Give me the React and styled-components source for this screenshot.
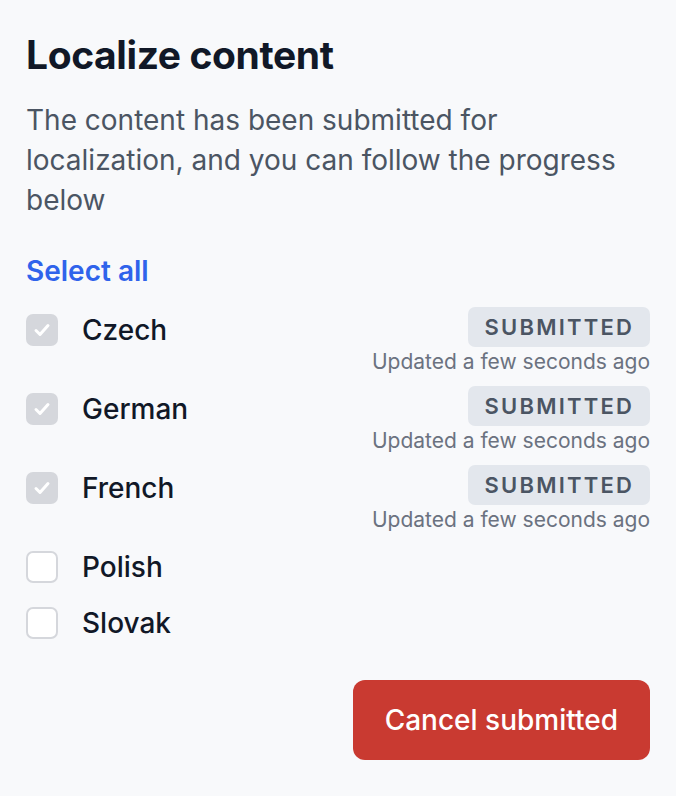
import React, { useState } from 'react';
import styled, { createGlobalStyle } from 'styled-components';

const GlobalStyle = createGlobalStyle`
  html, body {
    margin: 0;
    padding: 0;
    background: #f8f9fb;
  }
  body {
    font-family: Inter, "Noto Sans", "Liberation Sans", sans-serif;
    -webkit-font-smoothing: antialiased;
  }
`;

const Panel = styled.div`
  width: 676px;
  min-height: 796px;
  box-sizing: border-box;
  padding: 31px 26px 30px 26px;
  background: #f8f9fb;
  display: flex;
  flex-direction: column;
`;

const Title = styled.h1`
  margin: 0;
  font-size: 39px;
  line-height: 48px;
  font-weight: 700;
  color: #111827;
  letter-spacing: -0.4px;
`;

const Description = styled.p`
  margin: 21px 0 0 0;
  font-size: 28px;
  line-height: 40px;
  color: #4b5563;
`;

const SelectAll = styled.button`
  align-self: flex-start;
  margin-top: 31px;
  padding: 0;
  border: none;
  background: none;
  font-family: inherit;
  font-size: 28px;
  line-height: 40px;
  font-weight: 600;
  color: #2f63eb;
  cursor: pointer;
`;

const List = styled.div`
  margin-top: 16px;
  display: flex;
  flex-direction: column;
  gap: 10px;
`;

const Row = styled.div`
  display: flex;
  align-items: flex-start;
  justify-content: space-between;
`;

const Choice = styled.label`
  display: flex;
  align-items: center;
  gap: 24px;
  height: 46px;
  cursor: pointer;
`;

const Box = styled.span`
  width: 32px;
  height: 32px;
  box-sizing: border-box;
  border-radius: 7px;
  display: flex;
  align-items: center;
  justify-content: center;
  background: ${p => (p.$checked ? '#d5d7dc' : '#ffffff')};
  border: ${p => (p.$checked ? 'none' : '2px solid #d5d7dc')};
`;

const Label = styled.span`
  font-size: 28px;
  font-weight: 500;
  color: #111827;
`;

const Status = styled.div`
  display: flex;
  flex-direction: column;
  align-items: flex-end;
  gap: 1px;
`;

const Badge = styled.span`
  height: 40px;
  box-sizing: border-box;
  padding: 0 16px 0 17px;
  display: flex;
  align-items: center;
  border-radius: 7px;
  background: #e3e7ed;
  color: #4b5563;
  font-size: 22px;
  font-weight: 600;
  letter-spacing: 2.2px;
  text-transform: uppercase;
`;

const Updated = styled.span`
  font-size: 21px;
  line-height: 28px;
  color: #6b7280;
`;

const Footer = styled.div`
  margin-top: 34px;
  display: flex;
  justify-content: flex-end;
`;

const CancelButton = styled.button`
  height: 80px;
  padding: 0 32px;
  border: none;
  border-radius: 12px;
  background: #c93a31;
  color: #ffffff;
  font-family: inherit;
  font-size: 28px;
  font-weight: 500;
  cursor: pointer;
`;

const Check = () => (
  <svg width="20" height="20" viewBox="0 0 20 20" fill="none">
    <path d="M4 10.5l4 4 8-9" stroke="#ffffff" strokeWidth="3" strokeLinecap="round" strokeLinejoin="round" />
  </svg>
);

const languages = [
  { name: 'Czech', submitted: true },
  { name: 'German', submitted: true },
  { name: 'French', submitted: true },
  { name: 'Polish', submitted: false },
  { name: 'Slovak', submitted: false },
];

export default function App() {
  const [items] = useState(languages);

  return (
    <>
      <GlobalStyle />
      <Panel>
        <Title>Localize content</Title>
        <Description>
          The content has been submitted for localization, and you can follow the progress below
        </Description>
        <SelectAll>Select all</SelectAll>
        <List>
          {items.map(item => (
            <Row key={item.name}>
              <Choice>
                <Box $checked={item.submitted}>{item.submitted && <Check />}</Box>
                <Label>{item.name}</Label>
              </Choice>
              {item.submitted && (
                <Status>
                  <Badge>Submitted</Badge>
                  <Updated>Updated a few seconds ago</Updated>
                </Status>
              )}
            </Row>
          ))}
        </List>
        <Footer>
          <CancelButton>Cancel submitted</CancelButton>
        </Footer>
      </Panel>
    </>
  );
}
